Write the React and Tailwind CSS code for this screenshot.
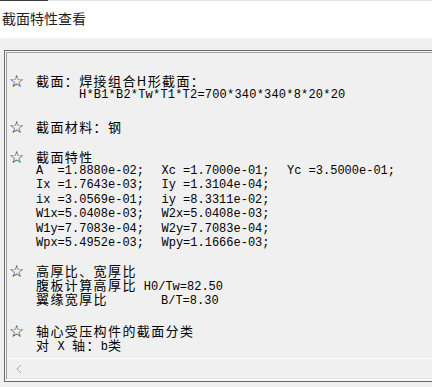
const mono = { fontFamily: '"Liberation Mono", "Noto Sans CJK SC", monospace' };

const Cjk = ({ children }) => (
    <span className="text-[13px] tracking-[1.4px] [font-family:'Noto_Sans_CJK_SC',sans-serif]">{children}</span>
);

const Line = ({ children, className = '' }) => (
    <div className={`h-[14px] leading-[14px] whitespace-pre ${className}`}>{children}</div>
);

const Block = ({ children, className = '' }) => (
    <div className={`flex ${className}`}>
        <div className="w-[29px] h-[14px] pl-[2px] text-[17px] leading-[14px] text-[#111] [font-family:'DejaVu_Sans',sans-serif]">☆</div>
        <div className="flex flex-col">{children}</div>
    </div>
);

const props = [
    ['A  =1.8880e-02;', 'Xc =1.7000e-01;', 'Yc =3.5000e-01;'],
    ['Ix =1.7643e-03;', 'Iy =1.3104e-04;'],
    ['ix =3.0569e-01;', 'iy =8.3311e-02;'],
    ['W1x=5.0408e-03;', 'W2x=5.0408e-03;'],
    ['W1y=7.7083e-04;', 'W2y=7.7083e-04;'],
    ['Wpx=5.4952e-03;', 'Wpy=1.1666e-03;'],
];

const App = () => {
    return (
        <div className="w-[432px] h-[387px] overflow-hidden bg-[#f0f0f0] text-black">
            <div className="flex h-[1px]">
                <div className="w-[48px] bg-[#3a3a3a]"></div>
                <div className="flex-1 bg-[#e2e2e2]"></div>
            </div>
            <div className="h-[37px] bg-white pt-[10px] pl-[2px] text-[14px] leading-[14px] text-[#1e1e1e] [font-family:'Noto_Sans_CJK_SC',sans-serif]">
                截面特性查看
            </div>
            <div className="pt-[12px] pl-[4px]">
                <div className="w-[460px] h-[332px] border-t border-l border-b border-[#696969] bg-[#f7f7f7] pt-[1px] pl-[1px]">
                    <div className="h-[327px] flex flex-col border-t border-l border-[#a0a0a0] bg-[#f0f0f0]">
                        <div className="h-[305px] overflow-hidden pt-[21px] text-[12px]" style={mono}>
                            <Block>
                                <Line><Cjk>截面：焊接组合H形截面：</Cjk></Line>
                                <Line className="pl-[43px] tracking-[0.2px]">H*B1*B2*Tw*T1*T2=700*340*340*8*20*20</Line>
                            </Block>
                            <Block className="mt-[18px]">
                                <Line><Cjk>截面材料：钢</Cjk></Line>
                            </Block>
                            <Block className="mt-[15.6px]">
                                <Line className="!h-[14.4px]"><Cjk>截面特性</Cjk></Line>
                                {props.map((row, i) => (
                                    <div key={i} className="flex h-[14.4px] leading-[14px] whitespace-pre">
                                        {row.map((cell, j) => (
                                            <span key={j} className="w-[125.5px]">{cell}</span>
                                        ))}
                                    </div>
                                ))}
                            </Block>
                            <Block className="mt-[13.6px]">
                                <Line><Cjk>高厚比、宽厚比</Cjk></Line>
                                <Line><Cjk>腹板计算高厚比</Cjk><span className="ml-[7px]">H0/Tw=82.50</span></Line>
                                <Line><Cjk>翼缘宽厚比</Cjk><span className="ml-[53px]">B/T=8.30</span></Line>
                            </Block>
                            <Block className="mt-[18px]">
                                <Line><Cjk>轴心受压构件的截面分类</Cjk></Line>
                                <Line><Cjk>对</Cjk> X <Cjk>轴：</Cjk>b<Cjk>类</Cjk></Line>
                            </Block>
                        </div>
                        <div className="h-[20px] border-t border-white flex items-center pl-[8px]">
                            <svg width="8" height="10" viewBox="0 0 8 10">
                                <polyline points="6,1 2,5 6,9" fill="none" stroke="#a8a8a8" strokeWidth="1" />
                            </svg>
                        </div>
                        <div className="flex-1 bg-[#e6e6e6]"></div>
                    </div>
                </div>
            </div>
        </div>
    );
};

export default App;
